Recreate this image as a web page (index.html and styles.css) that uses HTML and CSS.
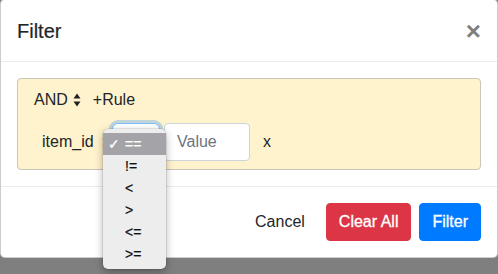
FILE: index.html
```html
<!DOCTYPE html>
<html>
<head>
<meta charset="utf-8">
<link rel="stylesheet" href="styles.css">
</head>
<body>
<div class="modal">
  <div class="modal-header">
    <div class="modal-title">Filter</div>
    <button class="close">×</button>
  </div>
  <div class="modal-body">
    <div class="rule-group">
      <div class="group-header">
        <span class="combinator">AND</span>
        <svg class="updown" width="8" height="16" viewBox="0 0 8 16"><path d="M0.5 6.5 L4 1.5 L7.5 6.5 Z M0.5 9.5 L4 14.5 L7.5 9.5 Z" fill="#222"/></svg>
        <span class="add-rule">+Rule</span>
      </div>
      <div class="rule">
        <span class="field">item_id</span>
        <span class="colon">:</span>
        <span class="op-select"></span>
        <span class="value-input">Value</span>
        <span class="remove">x</span>
      </div>
    </div>
  </div>
  <div class="modal-footer">
    <button class="btn btn-cancel">Cancel</button>
    <button class="btn btn-danger">Clear All</button>
    <button class="btn btn-primary">Filter</button>
  </div>
</div>
<ul class="dropdown">
  <li class="selected"><span class="check">✓</span>==</li>
  <li>!=</li>
  <li>&lt;</li>
  <li>&gt;</li>
  <li>&lt;=</li>
  <li>&gt;=</li>
</ul>
</body>
</html>
```
FILE: styles.css
```css
html, body {
  margin: 0;
  padding: 0;
}
body {
  background: #7f7f7f;
  font-family: "Liberation Sans", Arial, sans-serif;
  font-size: 16px;
  line-height: 24px;
  color: #212529;
  position: relative;
  height: 274px;
  overflow: hidden;
}
.modal {
  background: #fff;
  border: 1px solid rgba(0,0,0,0.2);
  border-radius: 5px;
  margin-top: -1px;
  box-sizing: border-box;
  width: 498px;
}
.modal-header {
  display: flex;
  align-items: flex-start;
  padding: 16px 16px 15px 16px;
  border-bottom: 1px solid #e9ecef;
}
.modal-title {
  font-size: 20px;
  line-height: 30px;
  font-weight: 500;
  -webkit-text-stroke: 0.2px #212529;
}
.close {
  margin-left: auto;
  background: none;
  border: 0;
  padding: 0;
  font-family: "Liberation Sans", Arial, sans-serif;
  font-size: 26px;
  font-weight: 700;
  line-height: 30px;
  color: #000;
  opacity: 0.5;
}
.modal-body {
  padding: 16px;
}
.rule-group {
  background: #fff3cd;
  border: 1px solid #cbc6b8;
  border-radius: 4px;
  padding: 8px 0 8px 16px;
}
.group-header {
  display: flex;
  align-items: center;
  height: 26px;
}
.updown {
  margin-left: 5px;
}
.add-rule {
  margin-left: 12px;
}
.rule {
  display: flex;
  align-items: center;
  height: 38px;
  margin-top: 10px;
  padding-left: 8px;
}
.colon {
  margin-left: 8px;
}
.op-select {
  box-sizing: border-box;
  margin-left: 6px;
  width: 48px;
  height: 38px;
  background: #fff;
  border: 1px solid #80bdff;
  border-radius: 6px;
  box-shadow: 0 0 0 3px rgba(0,123,255,0.25);
}
.value-input {
  box-sizing: border-box;
  margin-left: 4px;
  width: 86px;
  height: 38px;
  background: #fff;
  border: 1px solid #ced4da;
  border-radius: 4px;
  padding: 6px 12px;
  color: #6c757d;
}
.remove {
  margin-left: 13px;
}
.modal-footer {
  display: flex;
  justify-content: flex-end;
  align-items: center;
  padding: 12px;
  border-top: 1px solid #e9ecef;
}
.btn {
  margin: 4px;
  padding: 6px 12px;
  font-family: "Liberation Sans", Arial, sans-serif;
  font-size: 16px;
  line-height: 24px;
  border: 1px solid transparent;
  border-radius: 4px;
}
.btn-cancel {
  background: transparent;
  color: #212529;
}
.btn-danger {
  background: #dc3545;
  border-color: #dc3545;
  color: #fff;
  -webkit-text-stroke: 0.3px #fff;
}
.btn-primary {
  background: #007bff;
  border-color: #007bff;
  color: #fff;
  -webkit-text-stroke: 0.3px #fff;
}
.dropdown {
  position: absolute;
  left: 103px;
  top: 129px;
  width: 63px;
  height: 140px;
  box-sizing: border-box;
  margin: 0;
  padding: 4px 0 0 0;
  list-style: none;
  background: #ededed;
  border-radius: 5px;
  box-shadow: 0 0 0 0.5px rgba(0,0,0,0.15), 0 3px 8px rgba(0,0,0,0.3);
  font-size: 14px;
  line-height: 22px;
  color: #111;
  -webkit-text-stroke: 0.2px #111;
}
.dropdown li {
  height: 22px;
  padding-left: 22px;
  position: relative;
}
.dropdown li.selected {
  background: #a3a3a8;
  color: #fff;
  -webkit-text-stroke: 0.3px #fff;
}
.check {
  position: absolute;
  left: 5px;
  top: 0;
  font-size: 14px;
}
```
